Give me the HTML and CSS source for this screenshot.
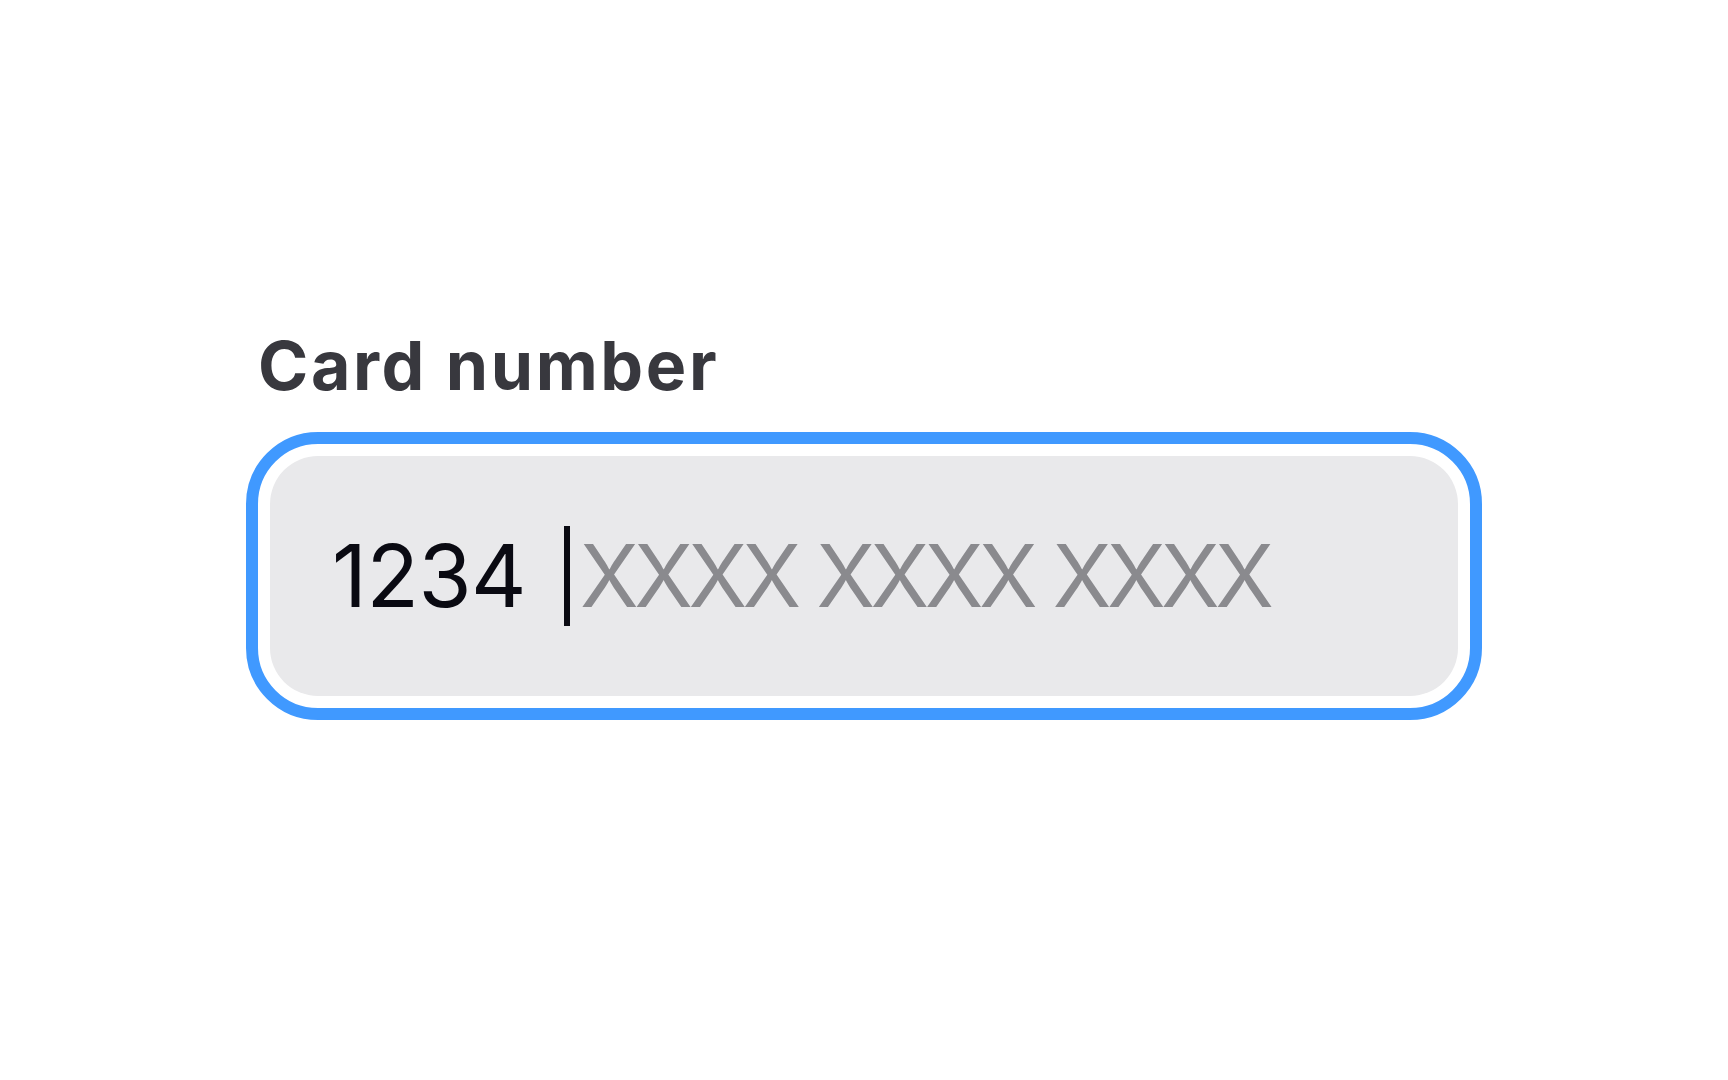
FILE: index.html
```html
<!DOCTYPE html>
<html lang="en">
<head>
<meta charset="utf-8">
<title>Card number</title>
<link rel="stylesheet" href="styles.css">
</head>
<body>
<main class="page">
  <div class="field">
    <label class="field-label" for="card">Card number</label>
    <div class="focus-ring">
      <div class="input" id="card">
        <span class="typed">1234</span>
        <span class="caret"></span>
        <span class="placeholder">XXXX XXXX XXXX</span>
      </div>
    </div>
  </div>
</main>
</body>
</html>
```
FILE: styles.css
```css
html, body {
  margin: 0;
  padding: 0;
  background: #ffffff;
}

.page {
  width: 1728px;
  height: 1080px;
  box-sizing: border-box;
  padding: 315px 246px 0 246px;
  font-family: Inter, "Liberation Sans", sans-serif;
}

.field {
  display: flex;
  flex-direction: column;
}

.field-label {
  font-size: 68px;
  font-weight: 700;
  color: #38383e;
  line-height: 100px;
  padding-left: 12px;
  margin-bottom: 17px;
  letter-spacing: 2.6px;
}

.focus-ring {
  border: 12px solid #4099ff;
  border-radius: 72px;
  padding: 12px;
  background: #ffffff;
}

.input {
  height: 240px;
  border-radius: 48px;
  background: #e9e9eb;
  display: flex;
  align-items: center;
  padding-left: 62px;
  font-size: 86px;
  font-weight: 400;
}

.typed {
  color: #0a0a12;
  margin-right: 38px;
  letter-spacing: -0.5px;
}

.caret {
  width: 6px;
  height: 100px;
  background: #0a0a12;
  margin-right: 10px;
}

.placeholder {
  color: #8a8a8e;
  white-space: pre;
  letter-spacing: -4.5px;
}
```
